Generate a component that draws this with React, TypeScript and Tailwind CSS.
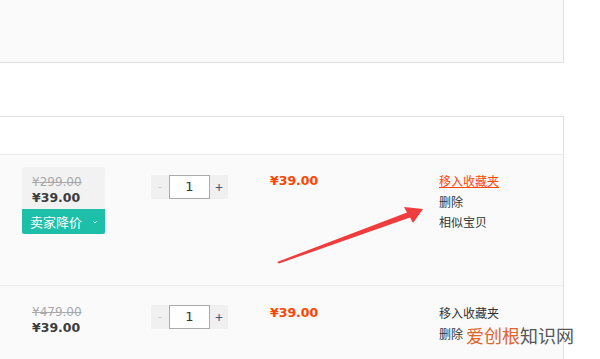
import type { ReactNode } from 'react'

const cjk = { fontFamily: '"Noto Sans CJK SC", "Noto Sans", sans-serif' }
const num = { fontFamily: '"DejaVu Sans", "Liberation Sans", sans-serif' }

type Item = { was: string; now: string; total: string; promo: boolean; active: boolean }

const items: Item[] = [
  { was: '¥299.00', now: '¥39.00', total: '¥39.00', promo: true, active: true },
  { was: '¥479.00', now: '¥39.00', total: '¥39.00', promo: false, active: false },
]

function Qty() {
  return (
    <div className="flex h-[24px] w-[77px]">
      <div className="flex w-[18px] items-center justify-center bg-[#f0f0f0] text-[12px] text-[#c8c8c8]">-</div>
      <div
        className="flex w-[41px] items-center justify-center border border-[#aaa] bg-white text-[13px] text-[#333]"
        style={num}
      >
        1
      </div>
      <div className="flex w-[18px] items-center justify-center bg-[#f0f0f0] text-[14px] text-[#3c5a78]">+</div>
    </div>
  )
}

function PriceCell({ item }: { item: Item }): ReactNode {
  const inner = (
    <>
      <p className="text-[12px] leading-[16px] text-[#a8a8a8] line-through" style={num}>{item.was}</p>
      <p className="text-[12.5px] font-bold leading-[16px] text-[#3c3c3c]" style={num}>{item.now}</p>
    </>
  )
  if (!item.promo) return <div className="pt-[18px] pl-[10px]">{inner}</div>
  return (
    <div className="mt-[12px] w-[83px] rounded-[2px] bg-[#f2f2f2]">
      <div className="pl-[10px] pt-[7px] pb-[3px]">{inner}</div>
      <div
        className="flex h-[25px] items-center rounded-b-[2px] bg-[#1dbfa8] pl-[8px] text-[13px] text-white"
        style={cjk}
      >
        卖家降价
        <svg width="8" height="6" viewBox="0 0 8 6" className="ml-[9px]">
          <path d="M2 2l2 2 2-2" stroke="#bdeee6" strokeWidth="1" fill="none" />
        </svg>
      </div>
    </div>
  )
}

function Row({ item }: { item: Item }) {
  const top = item.promo ? 'mt-[20px]' : 'mt-[19px]'
  return (
    <div className={`flex bg-[#fafafa] pl-[22px] ${item.promo ? 'h-[131px] border-b border-[#ececec]' : 'h-[80px]'}`}>
      <div className="w-[129px]">
        <PriceCell item={item} />
      </div>
      <div className={`w-[119px] ${top}`}>
        <Qty />
      </div>
      <div className={`w-[169px] ${item.promo ? 'mt-[18px]' : 'mt-[19px]'}`}>
        <p className="text-[12.5px] font-bold leading-[16px] text-[#ff4400]" style={num}>{item.total}</p>
      </div>
      <div
        className={`flex flex-col text-[12px] leading-[20.5px] text-[#333] ${item.promo ? 'mt-[16px]' : 'mt-[17px]'}`}
        style={cjk}
      >
        <span className={item.active ? 'text-[#ff4400] underline' : ''}>移入收藏夹</span>
        <span>删除</span>
        {item.promo && <span>相似宝贝</span>}
      </div>
    </div>
  )
}

export default function App() {
  return (
    <div className="relative h-[359px] w-[600px] overflow-hidden bg-white">
      <div className="h-[63px] w-[564px] border-r border-b border-[#e0e0e0] bg-[#fafafa]" />
      <div className="h-[53px]" />
      <div className="w-[564px] border-t border-r border-[#e0e0e0]">
        <div className="h-[38px] border-b border-[#ececec] bg-white" />
        {items.map((it, i) => (
          <Row key={i} item={it} />
        ))}
      </div>

      <svg className="absolute left-0 top-0" width="600" height="359" viewBox="0 0 600 359">
        <polygon
          points="277,262 407,212.5 404,207 423,209 413,223 410,217.5 279,263.5"
          fill="#f03c3c"
        />
      </svg>

      <div className="absolute left-[466px] top-[324px] text-[18px] leading-[22px]" style={cjk}>
        <span className="text-[#e0642c]">爱创根</span>
        <span className="text-[#555]">知识网</span>
      </div>
    </div>
  )
}
